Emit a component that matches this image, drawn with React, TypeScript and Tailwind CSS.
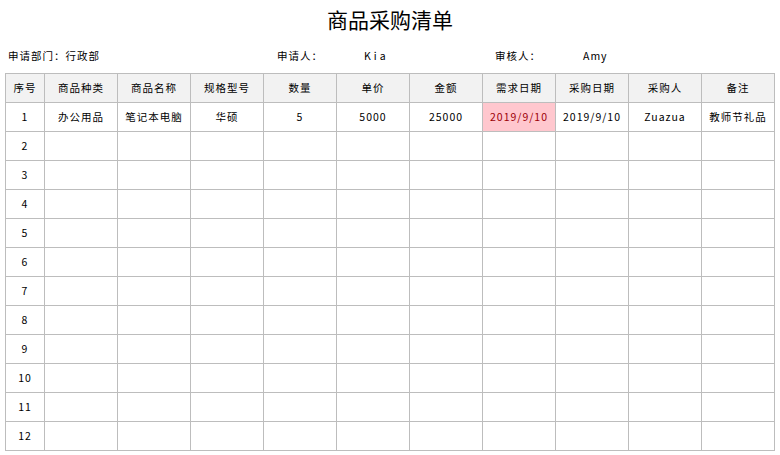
export default function App() {
  const heads = ["序号","商品种类","商品名称","规格型号","数量","单价","金额","需求日期","采购日期","采购人","备注"];
  const row1 = ["1","办公用品","笔记本电脑","华硕","5","5000","25000","2019/9/10","2019/9/10","Zuazua","教师节礼品"];
  const widths = [39,73,73,73,73,73,73,73,73,73,73];
  return (
    <div className="w-[780px] h-[455px] bg-white text-black overflow-hidden" style={{fontFamily:'"Noto Sans CJK SC", sans-serif'}}>
      <div className="h-[38px] flex items-center justify-center text-[21px] pt-[2px]">商品采购清单</div>
      <div className="h-[35px] flex items-center text-[10.5px] tracking-[1px] pl-[8px]">
        <span className="w-[269px]">申请部门：行政部</span>
        <span className="w-[87px]">申请人：</span>
        <span className="w-[131px] tracking-[3px]">Kia</span>
        <span className="w-[88px]">审核人：</span>
        <span>Amy</span>
      </div>
      <table className="ml-[5px] border-collapse table-fixed text-[10.5px] tracking-[1px]">
        <colgroup>{widths.map((w,i)=><col key={i} style={{width:w}} />)}</colgroup>
        <thead>
          <tr className="h-[29px] bg-[#f2f2f2]">
            {heads.map((h,i)=><th key={i} className="border border-[#bdbdbd] font-normal text-center">{h}</th>)}
          </tr>
        </thead>
        <tbody>
          <tr className="h-[29px]">
            {row1.map((c,i)=><td key={i} className={`border border-[#bdbdbd] text-center ${i===7?"bg-[#ffc7ce] text-[#9c0006]":""}`}>{c}</td>)}
          </tr>
          {Array.from({length:11},(_,r)=>(
            <tr key={r} className="h-[29px]">
              {widths.map((_,i)=><td key={i} className="border border-[#bdbdbd] text-center">{i===0?r+2:""}</td>)}
            </tr>
          ))}
        </tbody>
      </table>
    </div>
  );
}
